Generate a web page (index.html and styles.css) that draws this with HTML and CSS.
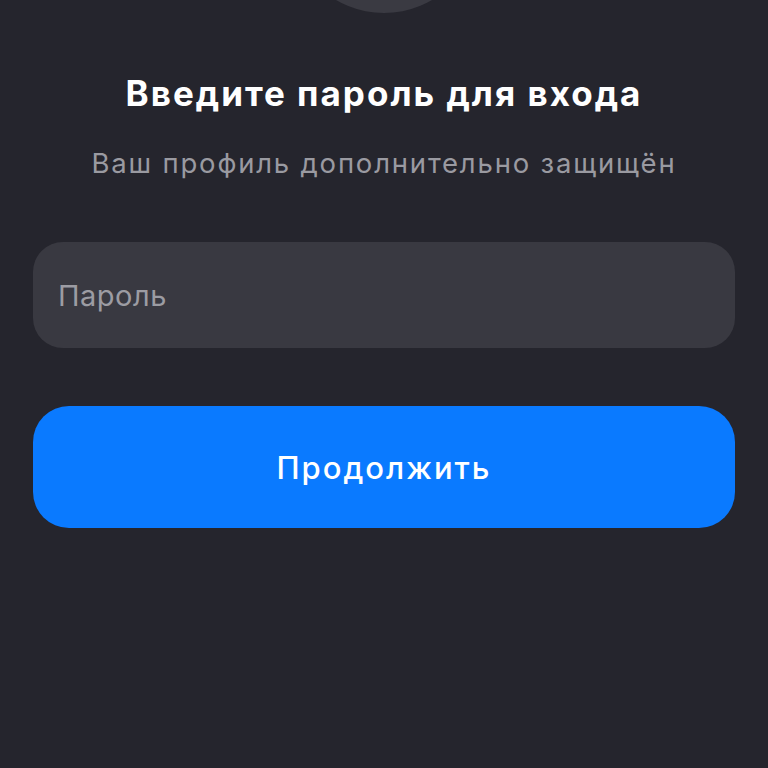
FILE: index.html
```html
<!DOCTYPE html>
<html lang="ru">
<head>
    <meta charset="UTF-8">
    <meta name="viewport" content="width=device-width, initial-scale=1.0">
    <title>Вход</title>
    <link rel="stylesheet" href="styles.css">
</head>
<body>
    <div class="screen">
        <div class="avatar"></div>
        <h1 class="title">Введите пароль для входа</h1>
        <p class="subtitle">Ваш профиль дополнительно защищён</p>
        <input class="password" type="password" placeholder="Пароль">
        <button class="continue">Продолжить</button>
    </div>
</body>
</html>
```

FILE: styles.css
```css
html, body {
    margin: 0;
    padding: 0;
    background-color: #25252d;
}
.screen {
    font-family: Inter, "Noto Sans", sans-serif;
    display: flex;
    flex-direction: column;
    align-items: center;
    padding: 0 33px;
    height: 768px;
    overflow: hidden;
}
.avatar {
    width: 190px;
    height: 190px;
    margin-top: -177px;
    border-radius: 50%;
    background: #3a3a42;
}
.title {
    margin: 60px 0 0;
    font-size: 35px;
    font-weight: 700;
    letter-spacing: 2px;
    color: #ffffff;
    line-height: 40px;
    white-space: nowrap;
}
.subtitle {
    margin: 33px 0 0;
    font-size: 27.5px;
    letter-spacing: 1.8px;
    color: #9a9aa1;
    line-height: 34px;
    white-space: nowrap;
}
.password {
    box-sizing: border-box;
    width: 100%;
    height: 106px;
    margin-top: 62px;
    padding: 0 25px;
    border: none;
    border-radius: 30px;
    background: #393941;
    font-family: inherit;
    font-size: 29px;
    letter-spacing: 0.5px;
    color: #ffffff;
    outline: none;
}
.password::placeholder {
    color: #9c9ca3;
}
.continue {
    width: 100%;
    height: 122px;
    margin-top: 58px;
    border: none;
    border-radius: 36px;
    background: #0a7aff;
    color: #ffffff;
    font-family: inherit;
    font-size: 31px;
    font-weight: 500;
    letter-spacing: 2px;
    cursor: pointer;
}
```
